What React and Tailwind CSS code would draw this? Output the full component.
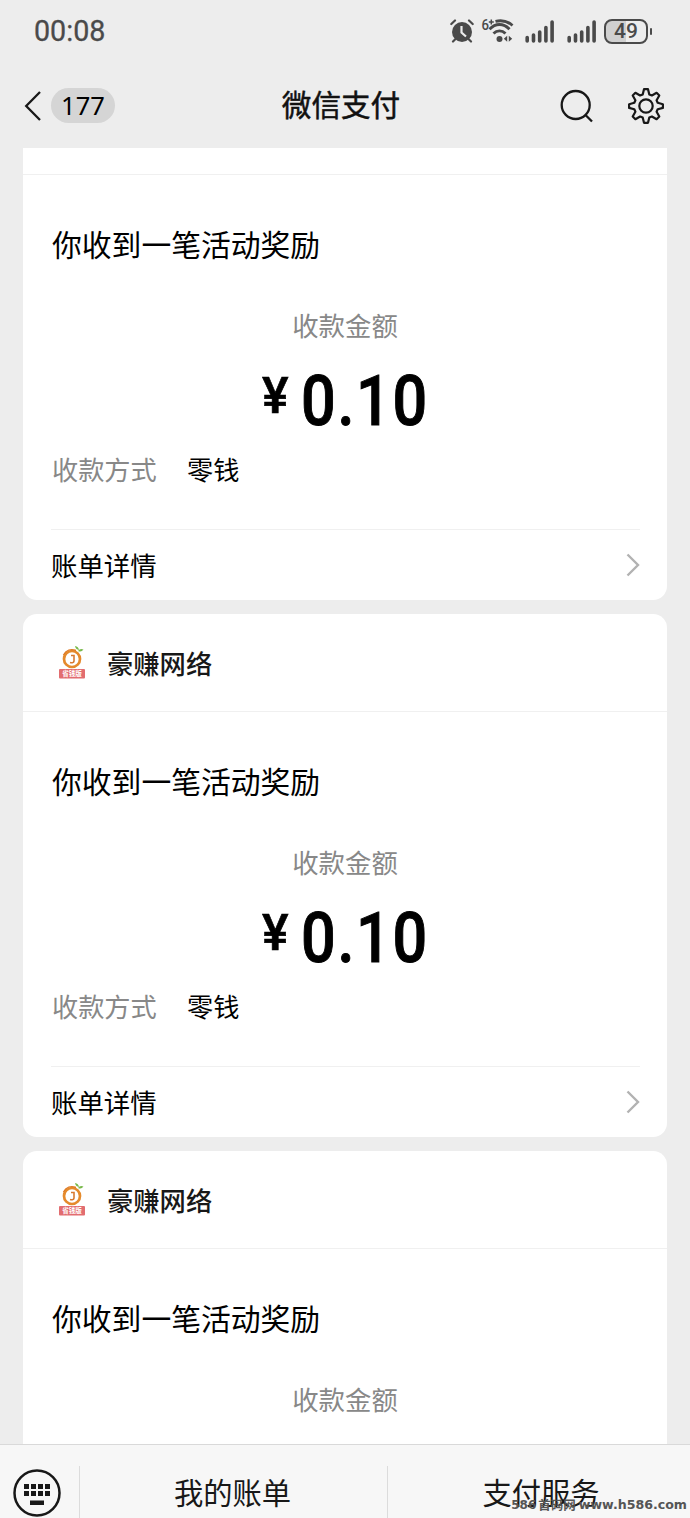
const payments = [
  { id: 1, merchant: '豪赚网络', amount: '0.10' },
  { id: 2, merchant: '豪赚网络', amount: '0.10' },
  { id: 3, merchant: '豪赚网络', amount: '0.10' },
];

function AlarmIcon() {
  return (
    <svg className="h-6 w-6" viewBox="0 0 24 24" fill="none" stroke="#4a4a4a">
      <circle cx="12" cy="13" r="10" fill="#4a4a4a" stroke="none" />
      <path d="M1.300 5 5 1.500M22.700 5 19 1.500M5 20.500l-2 2M19 20.500l2 2" strokeWidth="2.200" strokeLinecap="round" />
      <path d="M11.500 7v6.500l4.500 4" stroke="#ededed" strokeWidth="2.200" />
    </svg>
  );
}

function WifiIcon() {
  return (
    <svg className="h-6 w-8 overflow-visible" viewBox="0 0 32 24" fill="none" stroke="#4a4a4a">
      <text x="-0.500" y="10.800" fontSize="15.500" fontWeight="500" fontFamily="Roboto, sans-serif" fill="#4a4a4a" stroke="none" textLength="7.500" lengthAdjust="spacingAndGlyphs">6</text>
      <path d="M6.800 3h5M9.300 .5v5" strokeWidth="1.500" />
      <path d="M13.500 2.400C20 .8 26 2.500 30.500 6.500M7.500 10.200c6-6.300 14-6.300 20 0M11.500 14.500c3.500-3.500 8.500-3.500 12 0" strokeWidth="2.900" />
      <circle cx="17.500" cy="20" r="3" fill="#4a4a4a" stroke="none" />
      <path d="M25.200 16.800v6L21.800 19.800zM26.800 16.800v6l3.400-3z" fill="#4a4a4a" stroke="none" />
    </svg>
  );
}

function SignalIcon() {
  return (
    <svg className="h-[23px] w-[30px]" viewBox="0 0 30 23" stroke="#4a4a4a" strokeWidth="3.600" strokeLinecap="round">
      <path d="M2.200 17.500v3.500M8.500 15v6M14.700 12v9M20.900 7.500v13.500M27.100 2v19" />
    </svg>
  );
}

function StatusBar() {
  return (
    <div className="flex h-[62px] items-center pr-[38px] pl-[34px] text-[#4a4a4a]">
      <span className="font-['Roboto',sans-serif] text-[28.700px] leading-10 [-webkit-text-stroke:0.3px_#4a4a4a]">00:08</span>
      <div className="ml-auto flex items-center">
        <AlarmIcon />
        <div className="ml-2">
          <WifiIcon />
        </div>
        <div className="ml-[11px]">
          <SignalIcon />
        </div>
        <div className="ml-3">
          <SignalIcon />
        </div>
        <div className="ml-[7px] flex h-[25px] w-[44px] items-center justify-center rounded-[8px] border-2 border-[#4a4a4a] bg-linear-to-r from-[#d0d0d0] from-50% to-[#ededed] to-50% font-['Roboto',sans-serif] text-[21px] leading-5 font-medium">
          49
        </div>
        <div className="ml-[2px] h-[7px] w-[2px] rounded-full bg-[#4a4a4a]" />
      </div>
    </div>
  );
}

function NavBar() {
  return (
    <div className="grid h-[86px] grid-cols-3 items-center">
      <div className="flex items-center pt-px pl-6">
        <svg className="h-8 w-[18px]" viewBox="0 0 18 32" fill="none" stroke="#181818" strokeWidth="2.300">
          <path d="M16 2 2.200 16 16 30" />
        </svg>
        <span className="ml-[9px] flex h-[35px] w-16 items-center justify-center rounded-full bg-[#d5d5d5] pb-px font-['Noto_Sans',sans-serif] text-[25.500px] leading-[34px]">
          177
        </span>
      </div>
      <h1 className="pr-2 pb-[2px] text-center text-[29.600px] leading-[40px] text-[#111] [-webkit-text-stroke:0.5px_#111]">微信支付</h1>
      <div className="flex items-center justify-end pt-[2px] pr-[25px]">
        <svg className="h-[34px] w-[34px]" viewBox="0 0 34 34" fill="none" stroke="#181818" strokeWidth="2.300">
          <circle cx="15.700" cy="16" r="14" />
          <path d="m25.500 26 6.500 6.500" />
        </svg>
        <svg className="ml-[33px] h-[38px] w-[38px]" viewBox="0 0 38 38" fill="none" stroke="#181818" strokeWidth="2.200" strokeLinejoin="round">
          <path d="M17 2.200h4l1.300 5.200 2.600 1.100 4.700-2.700 2.700 2.700-2.700 4.700 1.100 2.600 5.200 1.400v3.700l-5.200 1.300-1.100 2.600 2.700 4.700-2.700 2.700-4.700-2.700-2.600 1.100-1.300 5.200h-4l-1.300-5.200-2.600-1.100-4.700 2.700-2.700-2.700 2.700-4.700-1.100-2.600-5.200-1.300v-3.700l5.200-1.400 1.100-2.600-2.700-4.700 2.700-2.700 4.700 2.700 2.600-1.100z" />
          <circle cx="19" cy="19" r="6.700" />
        </svg>
      </div>
    </div>
  );
}

function MerchantLogo() {
  return (
    <svg className="h-[34px] w-7" viewBox="0 0 28 34">
      <circle cx="14" cy="13" r="8" fill="none" stroke="#e58a2c" strokeWidth="2.700" />
      <path d="M5.500 9C8 4 13 2.500 18 4.500" fill="none" stroke="#de7a24" strokeWidth="1.500" />
      <path d="M17 0q3.500 .5 4 4-3.500-.5-4-4M20 5q2-3 5.500-1.500-2 3-5.500 1.500" fill="#79b94b" />
      <path d="M13 9.500h3v5.500q-.5 2.500-4 1.500" fill="none" stroke="#d77a32" strokeWidth="1.600" />
      <rect x="1" y="23" width="26" height="9.500" rx="1" fill="#e26d70" />
      <text x="14" y="30.200" textAnchor="middle" fontSize="6.500" fontWeight="700" fill="#fff">省钱版</text>
    </svg>
  );
}

function PaymentCard({ payment }) {
  return (
    <div className="h-[523px] shrink-0 rounded-[14px] bg-white">
      <div className="flex h-[98px] items-center border-b border-[#f0f0f0] pl-[35px]">
        <MerchantLogo />
        <span className="ml-[21px] text-[26.300px] leading-10 font-medium text-[#181818]">{payment.merchant}</span>
      </div>

      <div className="px-[29px]">
        <p className="pt-[48px] text-[29.800px] leading-10">你收到一笔活动奖励</p>
        <p className="mt-[42px] text-center text-[26.400px] leading-10 text-[#888]">收款金额</p>
        <div className="mt-[16px] flex h-[88px] pl-[210px] font-['Roboto',sans-serif] font-medium">
          <span className="text-[50px] leading-[70px] [-webkit-text-stroke:0.6px_#000]">¥</span>
          <span className="ml-[12px] origin-left scale-x-[0.86] text-[71px] leading-[80px] tracking-[2px] [-webkit-text-stroke:1px_#000]">
            {payment.amount}
          </span>
        </div>
        <div className="flex text-[26.200px] leading-10">
          <span className="w-[135px] text-[#888]">收款方式</span>
          <span>零钱</span>
        </div>
        <div className="-mr-[2px] -ml-px mt-[40px] flex h-[71px] items-center justify-between border-t border-[#f0f0f0] text-[26.400px]">
          <span>账单详情</span>
          <svg className="h-6 w-[14px]" viewBox="0 0 14 24" fill="none" stroke="#b2b2b2" strokeWidth="2.400">
            <path d="M1.500 1.500 12 12 1.500 22.500" />
          </svg>
        </div>
      </div>
    </div>
  );
}

function BottomBar() {
  return (
    <div className="relative flex h-[74px] shrink-0 overflow-hidden border-t border-[#d9d9d9] bg-[#f7f7f7] text-[29.300px] text-[#181818]">
      <div className="w-[79px] pt-[24px] pl-[13px]">
        <svg className="h-12 w-12" viewBox="0 0 48 48" fill="#181818">
          <circle cx="24" cy="24" r="22.500" fill="none" stroke="#181818" strokeWidth="2.500" />
          <path d="M11 15h5v5h-5zM18 15h5v5h-5zM25 15h5v5h-5zM32 15h5v5h-5zM11 22h5v5h-5zM18 22h5v5h-5zM25 22h5v5h-5zM32 22h5v5h-5zM17 31.500h14v4.500H17z" />
        </svg>
      </div>
      <div className="mt-[21px] w-[308px] border-l border-[#dcdcdc] pt-[5px] pr-[2px] text-center leading-10">我的账单</div>
      <div className="mt-[21px] flex-1 border-l border-[#dcdcdc] pt-[5px] pl-1 text-center leading-10">支付服务</div>
      <div className="absolute right-[3px] bottom-[3px] flex items-center text-[12.500px] leading-5 font-bold text-[#555]">
        <span className="font-['DejaVu_Sans',sans-serif] text-[12px]">586</span>
        <span className="ml-[2px]">首码网</span>
        <span className="ml-[3px] font-['DejaVu_Sans',sans-serif] text-[12.600px]">www.h586.com</span>
      </div>
    </div>
  );
}

export default function App() {
  return (
    <div className="flex h-[1518px] w-[690px] flex-col overflow-hidden bg-[#ededed] font-['Noto_Sans_CJK_SC',sans-serif] text-black">
      <StatusBar />
      <NavBar />
      <div className="min-h-0 flex-1 overflow-hidden px-[23px]">
        <div className="-mt-[71px] flex flex-col gap-[14px]">
          {payments.map((payment) => (
            <PaymentCard key={payment.id} payment={payment} />
          ))}
        </div>
      </div>
      <BottomBar />
    </div>
  );
}
